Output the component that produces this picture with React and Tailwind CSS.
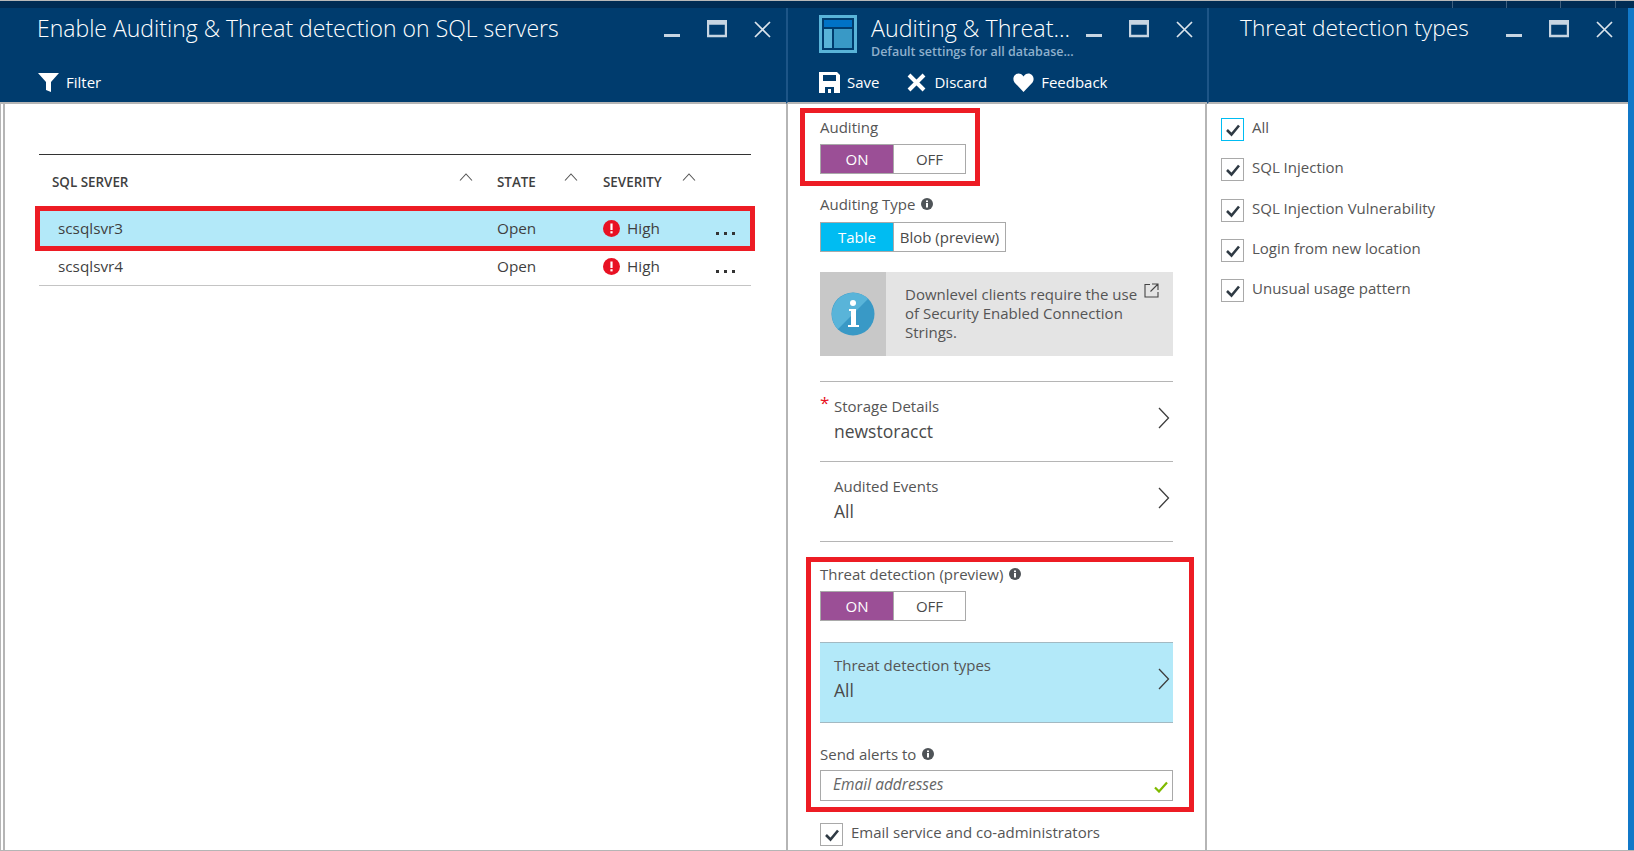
import React from "react";

const FONT = "font-['Open_Sans','Noto_Sans',sans-serif]";

// window buttons in a blade header
function WindowControls({ className = "" }) {
    return (
        <div className={`flex items-start ${className}`}>
            <svg width="20" height="20" viewBox="0 0 20 20" className="mr-[25px] mt-[12px] shrink-0">
                <rect x="2" y="14" width="16" height="3" fill="#c7d5e2" />
            </svg>
            <svg width="20" height="18" viewBox="0 0 20 18" className="mr-[27px] mt-[12px] shrink-0">
                <path d="M1 1h18v15H1z M1 3.500h18" fill="none" stroke="#c7d5e2" strokeWidth="2.400" />
            </svg>
            <svg width="17" height="17" viewBox="0 0 17 17" className="mt-[13px] shrink-0">
                <path d="M1 1l15 15M16 1L1 16" stroke="#dbe4ec" strokeWidth="1.700" />
            </svg>
        </div>
    );
}

function Toggle({ left, right, activeClass, rightWidth = "w-[72px]" }) {
    return (
        <div className="flex h-[30px] w-fit border border-[#a9a9a9] text-[15px] leading-[28px]">
            <div className={`w-[72px] text-center font-medium text-white ${activeClass}`}>{left}</div>
            <div className={`${rightWidth} whitespace-nowrap border-l border-[#a9a9a9] bg-white text-center text-[#4a4a4a]`}>{right}</div>
        </div>
    );
}

function InfoDot() {
    return (
        <svg width="12" height="12" viewBox="0 0 12 12" className="ml-[6px] inline-block shrink-0">
            <circle cx="6" cy="6" r="6" fill="#4f5458" />
            <rect x="5" y="5" width="2" height="4.500" fill="#fff" />
            <rect x="5" y="2.500" width="2" height="1.600" fill="#fff" />
        </svg>
    );
}

function Chevron() {
    return (
        <svg width="12" height="22" viewBox="0 0 12 22" className="mb-[8px] shrink-0">
            <path d="M1 1l9.500 10L1 21" fill="none" stroke="#3d3d3d" strokeWidth="1.300" />
        </svg>
    );
}

function Checkbox({ focused }) {
    return (
        <div className={`flex h-[23px] w-[23px] shrink-0 items-center justify-center border bg-white ${focused ? "border-[#00bcf2]" : "border-[#a9a9a9]"}`}>
            <svg width="16" height="14" viewBox="0 0 16 14" className="mt-[1px]">
                <path d="M2 7l4.500 4.500L14 2.500" fill="none" stroke="#2f3a44" strokeWidth="2.600" />
            </svg>
        </div>
    );
}

function AlertIcon() {
    return (
        <svg width="17" height="17" viewBox="0 0 17 17" className="shrink-0">
            <circle cx="8.500" cy="8.500" r="8.500" fill="#e81123" />
            <rect x="7.400" y="3.500" width="2.200" height="6.500" fill="#fff" />
            <rect x="7.400" y="11.200" width="2.200" height="2.200" fill="#fff" />
        </svg>
    );
}

function Dots() {
    return (
        <div className="mt-[10px] flex gap-[5px]">
            <span className="h-[3px] w-[3px] bg-[#333]" />
            <span className="h-[3px] w-[3px] bg-[#333]" />
            <span className="h-[3px] w-[3px] bg-[#333]" />
        </div>
    );
}

function Caret() {
    return (
        <svg width="14" height="8" viewBox="0 0 14 8" className="mb-[9px] shrink-0">
            <path d="M1 7.500L7 1l6 6.500" fill="none" stroke="#555" strokeWidth="1.100" />
        </svg>
    );
}

function ServerRow({ name, className }) {
    return (
        <div className={`flex items-center text-[15.300px] text-[#3f3f3f] ${className}`}>
            <div className="w-[457px] pl-[18px]">{name}</div>
            <div className="w-[106px]">Open</div>
            <AlertIcon />
            <div className="ml-[7px] w-[89px]">High</div>
            <Dots />
        </div>
    );
}

function DetailRow({ label, value, required, className = "h-[79px]", textClass = "pt-[14px]" }) {
    return (
        <div className={`relative flex items-center justify-between pr-[3px] ${className}`}>
            <div className={`self-start pl-[14px] ${textClass}`}>
                <div className="text-[15px] leading-[20px] text-[#555]">{label}</div>
                <div className="mt-[3px] text-[17.500px] leading-[25px] text-[#4a4a4a]">{value}</div>
            </div>
            <Chevron />
            {required && <span className="absolute left-0 top-[11px] text-[17px] leading-[20px] text-[#e81123]">*</span>}
        </div>
    );
}

function FilterRow({ label, focused, className = "" }) {
    return (
        <div className={`flex items-start ${className}`}>
            <Checkbox focused={focused} />
            <div className="ml-[8px] text-[15px] leading-[18px] text-[#555]">{label}</div>
        </div>
    );
}

function Header({ children, className = "" }) {
    return <div className={`relative h-[96px] shrink-0 border-b-2 border-[#b5b5b5] bg-[#003c6e] text-white ${className}`}>{children}</div>;
}

export default function App() {
    return (
        <div className={`flex h-[851px] w-[1634px] flex-col overflow-hidden bg-white ${FONT}`}>
            {/* top strip */}
            <div className="flex h-[8px] shrink-0 border-t border-[#b9b9b9] bg-[#002c54]">
                <div className="ml-[1452px] w-px bg-[#3f5f7e]" />
                <div className="ml-[53px] w-px bg-[#3f5f7e]" />
                <div className="ml-[53px] w-px bg-[#3f5f7e]" />
                <div className="ml-[54px] w-px bg-[#3f5f7e]" />
            </div>
            <div className="flex min-h-0 flex-1 border-b border-[#b5b5b5]">
                {/* first blade */}
                <section className="flex w-[786px] shrink-0 flex-col">
                    <Header>
                        <div className="flex">
                            <div className="ml-[37px] mt-[2px] w-[625px] whitespace-nowrap text-[23px] font-light leading-[36px]">Enable Auditing &amp; Threat detection on SQL servers</div>
                            <WindowControls />
                        </div>
                        <div className="ml-[38px] mt-[25px] flex items-center">
                            <svg width="21" height="19" viewBox="0 0 21 19">
                                <path d="M0 0h21L13 9v10l-5-2V9z" fill="#fff" />
                            </svg>
                            <span className="ml-[7px] text-[15px]">Filter</span>
                        </div>
                    </Header>
                    <div className="flex-1 border-l border-[#b5b5b5] pl-[2px]">
                        <div className="h-full border-l-2 border-[#b5b5b5] pl-[34px] pr-[35px] pt-[50px]">
                            <div className="border-t border-[#333]">
                                <div className="flex h-[56px] items-center pb-[2px] text-[13.400px] font-semibold text-[#3f3f3f]">
                                    <div className="flex w-[458px] items-center justify-between pl-[13px] pr-[24px]">
                                        SQL SERVER
                                        <Caret />
                                    </div>
                                    <div className="flex w-[106px] items-center justify-between pr-[25px]">
                                        STATE
                                        <Caret />
                                    </div>
                                    <div className="flex w-[93px] items-center justify-between">
                                        SEVERITY
                                        <Caret />
                                    </div>
                                </div>
                                <ServerRow name="scsqlsvr3" className="mx-[1px] h-[35px] bg-[#b3e9f9] outline-[5px] outline-[#ed1c24]" />
                                <ServerRow name="scsqlsvr4" className="mt-[2px] h-[38px] border-b border-[#c4c4c4] pl-[1px]" />
                            </div>
                        </div>
                    </div>
                </section>

                {/* second blade */}
                <section className="flex w-[421px] shrink-0 flex-col">
                    <Header className="border-l-2 border-l-[#1d5587]">
                        <div className="flex">
                            <svg width="38" height="38" viewBox="0 0 38 38" className="ml-[31px] mt-[7px] shrink-0">
                                <rect x="1.500" y="1.500" width="35" height="35" fill="#003c6e" stroke="#59b4d9" strokeWidth="3" />
                                <rect x="5" y="5" width="28" height="7" fill="#0072c6" />
                                <rect x="5" y="14" width="8" height="19" fill="#59b4d9" />
                                <rect x="15" y="14" width="18" height="19" fill="#3999c6" />
                            </svg>
                            <div className="ml-[14px] w-[215px]">
                                <div className="mt-[2px] whitespace-nowrap text-[23.300px] font-light leading-[36px]">Auditing &amp; Threat...</div>
                                <div className="-mt-[3px] whitespace-nowrap text-[12.500px] font-semibold leading-[18px] text-[#8fb0cc]">Default settings for all database...</div>
                            </div>
                            <WindowControls className="-ml-[2px]" />
                        </div>
                        <div className="ml-[31px] mt-[10px] flex items-center text-[15px]">
                            <svg width="21" height="21" viewBox="0 0 21 21">
                                <path fillRule="evenodd" d="M0 0h18l3 3v18H0zM4 3v6h13V3zM6 15v6h9v-6zM9 17h3v4H9z" fill="#fff" />
                            </svg>
                            <span className="ml-[7px]">Save</span>
                            <svg width="19" height="19" viewBox="0 0 19 19" className="ml-[28px]">
                                <path d="M2 2l15 15M17 2L2 17" stroke="#fff" strokeWidth="4" />
                            </svg>
                            <span className="ml-[8px]">Discard</span>
                            <svg width="21" height="19" viewBox="0 0 21 19" className="ml-[26px]">
                                <path d="M10.500 19L1.500 9.500C-2 4 3.500 -1.500 8 1c1.200.7 2 1.700 2.500 2.500C11 2.700 11.800 1.700 13 1c4.500-2.500 10 3 6.500 8.500z" fill="#fff" />
                            </svg>
                            <span className="ml-[7px]">Feedback</span>
                        </div>
                    </Header>
                    <div className="flex-1 overflow-hidden border-x-2 border-[#b5b5b5] pl-[32px] pr-[32px] pt-[9px]">
                        {/* auditing, highlighted */}
                        <div className="-ml-[15px] h-[68px] w-[170px] pl-[15px] pt-[4px] outline-[5px] outline-[#ed1c24]">
                            <div className="text-[15px] leading-[20px] text-[#555]">Auditing</div>
                            <div className="mt-[7px]"><Toggle left="ON" right="OFF" activeClass="bg-[#9b4f96]" /></div>
                        </div>
                        <div className="mt-[13px] flex items-center text-[15px] leading-[20px] text-[#555]">Auditing Type<InfoDot /></div>
                        <div className="mt-[8px]"><Toggle left="Table" right="Blob (preview)" activeClass="bg-[#00bcf2]" rightWidth="w-[112px]" /></div>
                        <div className="mt-[20px] flex h-[84px]">
                            <div className="flex w-[66px] items-center justify-center bg-[#c8c8c8]">
                                <svg width="44" height="44" viewBox="0 0 44 44">
                                    <circle cx="22" cy="22" r="21.500" fill="#3999c6" />
                                    <path d="M6.800 37.200A21.500 21.500 0 0 1 37.200 6.800z" fill="#59b4d9" />
                                    <circle cx="22" cy="11" r="3" fill="#fff" />
                                    <path d="M18 17h7v16h3v2H17v-2h3V19h-2z" fill="#fff" />
                                </svg>
                            </div>
                            <div className="relative flex-1 bg-[#e4e4e4] pl-[19px] pt-[13px] text-[15px] leading-[19px] text-[#555]">
                                Downlevel clients require the use<br />of Security Enabled Connection<br />Strings.
                                <svg width="15" height="15" viewBox="0 0 15 15" className="absolute right-[14px] top-[11px]">
                                    <path d="M6 1.500H1v12.500h13V9M8 1h6v6M14 1L6.500 8.500" fill="none" stroke="#444" strokeWidth="1.100" />
                                </svg>
                            </div>
                        </div>
                        <div className="mt-[25px] border-t border-[#b5b5b5]" />
                        <DetailRow label="Storage Details" value="newstoracct" required />
                        <div className="border-t border-[#b5b5b5]" />
                        <DetailRow label="Audited Events" value="All" />
                        <div className="border-t border-[#b5b5b5]" />

                        {/* threat detection, highlighted */}
                        <div className="-ml-[9px] -mr-[16px] mt-[20px] h-[245px] pl-[9px] pr-[16px] pt-[2px] outline-[5px] outline-[#ed1c24]">
                            <div className="flex items-center text-[15px] leading-[20px] text-[#555]">Threat detection (preview)<InfoDot /></div>
                            <div className="mt-[7px]"><Toggle left="ON" right="OFF" activeClass="bg-[#9b4f96]" /></div>
                            <DetailRow label="Threat detection types" value="All" className="mt-[21px] h-[81px] border-y border-[#a3b9c2] bg-[#b3e9f9]" textClass="pt-[12px]" />
                            <div className="mt-[21px] flex items-center text-[15px] leading-[20px] text-[#555]">Send alerts to<InfoDot /></div>
                            <div className="mt-[6px] flex h-[31px] items-center justify-between border border-[#a9a9a9] pb-[2px] pl-[12px] pr-[4px] text-[15.500px] italic text-[#666]">
                                Email addresses
                                <svg width="14" height="12" viewBox="0 0 14 12" className="mt-[4px]">
                                    <path d="M1 6.500l4 4L13 1.500" fill="none" stroke="#7fba00" strokeWidth="2.200" />
                                </svg>
                            </div>
                        </div>
                        <FilterRow label="Email service and co-administrators" className="mt-[16px]" />
                    </div>
                </section>

                {/* third blade */}
                <section className="flex w-[421px] shrink-0 flex-col">
                    <Header className="border-l-2 border-l-[#1d5587]">
                        <div className="flex">
                            <div className="ml-[31px] mt-[2px] w-[264px] whitespace-nowrap text-[22.700px] font-light leading-[36px]">Threat detection types</div>
                            <WindowControls />
                        </div>
                    </Header>
                    <div className="flex flex-1 flex-col gap-[17.250px] pl-[14px] pt-[14px]">
                        <FilterRow label="All" focused />
                        <FilterRow label="SQL Injection" />
                        <FilterRow label="SQL Injection Vulnerability" />
                        <FilterRow label="Login from new location" />
                        <FilterRow label="Unusual usage pattern" />
                    </div>
                </section>
                <div className="flex-1 bg-[#1178c8]" />
            </div>
        </div>
    );
}
